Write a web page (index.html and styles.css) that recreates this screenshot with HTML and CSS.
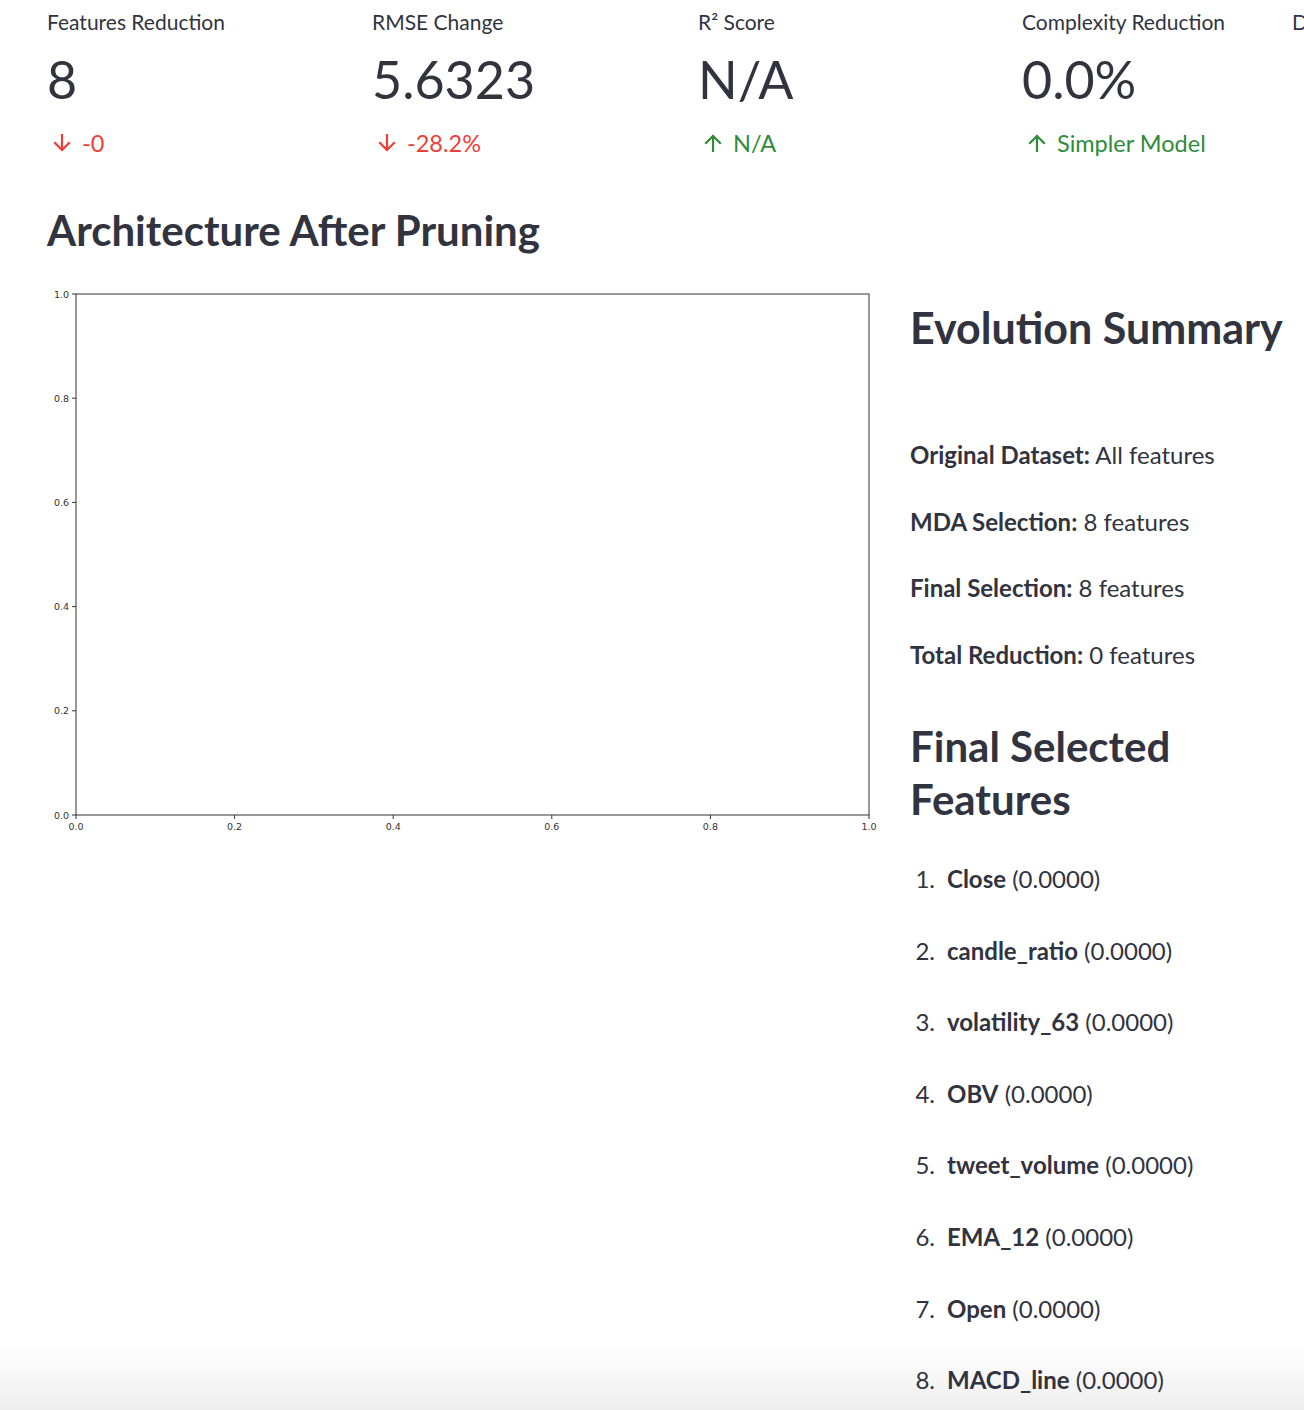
FILE: index.html
```html
<!DOCTYPE html>
<html lang="en">
<head>
<meta charset="utf-8">
<title>Architecture After Pruning</title>
<link rel="stylesheet" href="styles.css">
</head>
<body>
<div class="page">
  <div class="metrics">
    <div class="metric">
      <div class="metric-label">Features Reduction</div>
      <div class="metric-value">8</div>
      <div class="metric-delta down">
        <svg class="arrow" viewBox="0 0 24 24"><path d="M12 4v15M5 12l7 7 7-7"/></svg>
        <span>-0</span>
      </div>
    </div>
    <div class="metric">
      <div class="metric-label">RMSE Change</div>
      <div class="metric-value">5.6323</div>
      <div class="metric-delta down">
        <svg class="arrow" viewBox="0 0 24 24"><path d="M12 4v15M5 12l7 7 7-7"/></svg>
        <span>-28.2%</span>
      </div>
    </div>
    <div class="metric">
      <div class="metric-label">R² Score</div>
      <div class="metric-value">N/A</div>
      <div class="metric-delta up">
        <svg class="arrow" viewBox="0 0 24 24"><path d="M12 20V5M5 12l7-7 7 7"/></svg>
        <span>N/A</span>
      </div>
    </div>
    <div class="metric">
      <div class="metric-label">Complexity Reduction</div>
      <div class="metric-value">0.0%</div>
      <div class="metric-delta up">
        <svg class="arrow" viewBox="0 0 24 24"><path d="M12 20V5M5 12l7-7 7 7"/></svg>
        <span>Simpler Model</span>
      </div>
    </div>
    <div class="metric">
      <div class="metric-label">Depth</div>
    </div>
  </div>

  <h3 class="section-title">Architecture After Pruning</h3>

  <div class="row">
    <div class="chart-col">
      <svg class="chart" width="840" height="550" viewBox="0 0 840 550">
        <rect x="29" y="9" width="793" height="521" fill="#fff" stroke="#333" stroke-width="1"/>
        <g stroke="#333" stroke-width="1">
          <line x1="25" y1="9" x2="29" y2="9"/>
          <line x1="25" y1="113.2" x2="29" y2="113.2"/>
          <line x1="25" y1="217.4" x2="29" y2="217.4"/>
          <line x1="25" y1="321.6" x2="29" y2="321.6"/>
          <line x1="25" y1="425.8" x2="29" y2="425.8"/>
          <line x1="25" y1="530" x2="29" y2="530"/>
          <line x1="29" y1="530" x2="29" y2="534"/>
          <line x1="187.6" y1="530" x2="187.6" y2="534"/>
          <line x1="346.2" y1="530" x2="346.2" y2="534"/>
          <line x1="504.8" y1="530" x2="504.8" y2="534"/>
          <line x1="663.4" y1="530" x2="663.4" y2="534"/>
          <line x1="822" y1="530" x2="822" y2="534"/>
        </g>
        <g class="tick" text-anchor="end">
          <text x="22" y="12.5">1.0</text>
          <text x="22" y="116.7">0.8</text>
          <text x="22" y="220.9">0.6</text>
          <text x="22" y="325.1">0.4</text>
          <text x="22" y="429.3">0.2</text>
          <text x="22" y="533.5">0.0</text>
        </g>
        <g class="tick" text-anchor="middle">
          <text x="29" y="545">0.0</text>
          <text x="187.6" y="545">0.2</text>
          <text x="346.2" y="545">0.4</text>
          <text x="504.8" y="545">0.6</text>
          <text x="663.4" y="545">0.8</text>
          <text x="822" y="545">1.0</text>
        </g>
      </svg>
    </div>
    <div class="side-col">
      <h2 class="side-title">Evolution Summary</h2>
      <p class="summary-line"><strong>Original Dataset:</strong> All features</p>
      <p class="summary-line"><strong>MDA Selection:</strong> 8 features</p>
      <p class="summary-line"><strong>Final Selection:</strong> 8 features</p>
      <p class="summary-line"><strong>Total Reduction:</strong> 0 features</p>
      <h3 class="features-title">Final Selected Features</h3>
      <ol class="feature-list">
        <li><span class="num">1.</span><span><strong>Close</strong> (0.0000)</span></li>
        <li><span class="num">2.</span><span><strong>candle_ratio</strong> (0.0000)</span></li>
        <li><span class="num">3.</span><span><strong>volatility_63</strong> (0.0000)</span></li>
        <li><span class="num">4.</span><span><strong>OBV</strong> (0.0000)</span></li>
        <li><span class="num">5.</span><span><strong>tweet_volume</strong> (0.0000)</span></li>
        <li><span class="num">6.</span><span><strong>EMA_12</strong> (0.0000)</span></li>
        <li><span class="num">7.</span><span><strong>Open</strong> (0.0000)</span></li>
        <li><span class="num">8.</span><span><strong>MACD_line</strong> (0.0000)</span></li>
      </ol>
    </div>
  </div>
</div>
</body>
</html>
```

FILE: styles.css
```css
html {
  margin: 0;
  padding: 0;
  background: #fff;
  overflow: hidden;
}
body {
  margin: 0;
  padding: 0;
  overflow: hidden;
  height: 1410px;
  font-family: "Lato", "Liberation Sans", sans-serif;
  color: #31333f;
  background: linear-gradient(to bottom, #ffffff 0, #ffffff 1345px, #eeeeee 1410px);
}
.page {
  width: 1304px;
  height: 1410px;
  overflow: hidden;
  padding-left: 47px;
  box-sizing: border-box;
}
.metrics {
  display: grid;
  grid-template-columns: 325px 326px 324px 270px 200px;
}
.metric-label {
  font-size: 21px;
  line-height: 28px;
  margin-top: 8px;
  white-space: nowrap;
}
.metric-value {
  font-size: 52px;
  line-height: 70px;
  margin-top: 8px;
  white-space: nowrap;
}
.metric-delta {
  display: flex;
  align-items: center;
  gap: 8px;
  font-size: 23.5px;
  line-height: 30px;
  margin-top: 14px;
  margin-left: 3px;
}
.metric-delta.down { color: #ee3e36; }
.metric-delta.up { color: #2e8b3a; }
.arrow {
  width: 24px;
  height: 24px;
  flex: none;
  fill: none;
  stroke: currentColor;
  stroke-width: 2.2;
  stroke-linecap: square;
}
.section-title {
  font-size: 42px;
  font-weight: 700;
  line-height: 53px;
  margin: 46px 0 28px 0;
  white-space: nowrap;
}
.row {
  display: flex;
  gap: 30px;
}
.chart-col {
  width: 833px;
  flex: none;
}
.chart { display: block; }
.tick {
  font-family: "DejaVu Sans", sans-serif;
  font-size: 9.5px;
  fill: #333;
}
.side-col {
  flex: 1;
  min-width: 0;
}
.side-title {
  font-size: 43px;
  font-weight: 700;
  line-height: 67px;
  margin: 9px 0 74px 0;
  white-space: nowrap;
}
.summary-line {
  font-size: 24px;
  line-height: 40px;
  margin: 0 0 26.5px 0;
  white-space: nowrap;
}
.summary-line strong { font-weight: 700; }
.features-title {
  font-size: 42px;
  font-weight: 700;
  line-height: 53px;
  margin: 45.5px 0 33px 0;
  width: 300px;
}
.feature-list {
  list-style: none;
  margin: 0;
  padding: 0;
}
.feature-list li {
  display: flex;
  font-size: 24px;
  line-height: 40px;
  margin-bottom: 31.6px;
  white-space: nowrap;
}
.feature-list .num {
  width: 25px;
  text-align: right;
  margin-right: 12px;
}
```
